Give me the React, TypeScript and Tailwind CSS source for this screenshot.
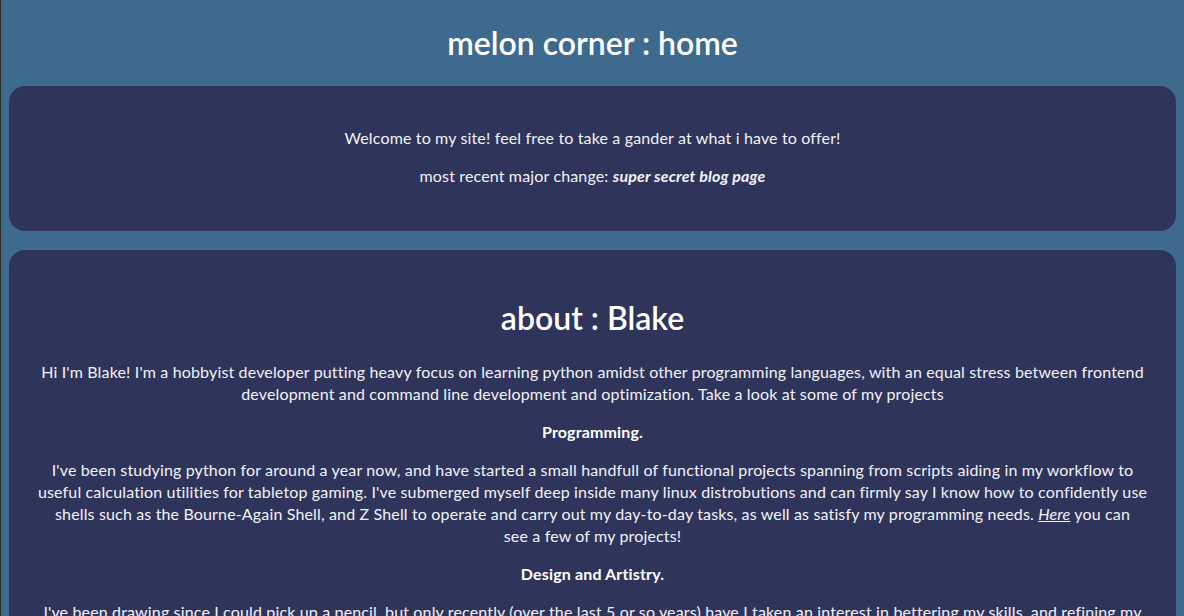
export default function App() {
  return (
    <div className="flow-root min-h-screen border-l border-[#2b2b2b] bg-[#3e6a8e] px-2 pb-5 text-[#f2f2f7] font-['Lato','Noto_Sans',sans-serif] text-base leading-[22px] tracking-[0.15px]">
      <h1 className="my-[21px] text-center text-[32px] leading-[44px] font-semibold tracking-normal text-white">
        melon corner : home
      </h1>

      <section className="rounded-2xl bg-[#2e345a] px-[25px] pt-[25px] pb-[28px] text-center">
        <p className="my-4">Welcome to my site! feel free to take a gander at what i have to offer!</p>
        <p className="my-4">
          most recent major change: <b className="italic font-bold">super secret blog page</b>
        </p>
      </section>

      <section className="mt-[19px] rounded-2xl bg-[#2e345a] px-[25px] pt-[25px] pb-[25px] text-center">
        <h2 className="my-[21px] text-[32px] leading-[44px] font-semibold tracking-normal text-white">about : Blake</h2>
        <p className="my-4">
          Hi I'm Blake! I'm a hobbyist developer putting heavy focus on learning python amidst other programming
          languages, with an equal stress between frontend development and command line development and
          optimization. Take a look at some of my projects
        </p>
        <p className="my-4 font-bold text-white">Programming.</p>
        <p className="my-4">
          I've been studying python for around a year now, and have started a small handfull of functional projects
          spanning from scripts aiding in my workflow to useful calculation utilities for tabletop gaming. I've
          submerged myself deep inside many linux distrobutions and can firmly say I know how to confidently use
          shells such as the Bourne-Again Shell, and Z Shell to operate and carry out my day-to-day tasks, as well as
          satisfy my programming needs. <a href="#" className="italic underline">Here</a> you can{" "}
          <span className="whitespace-nowrap">see a few</span> of my projects!
        </p>
        <p className="my-4 font-bold text-white">Design and Artistry.</p>
        <p className="my-4">
          I've been drawing since I could pick up a pencil, but only recently (over the last 5 or so years) have I
          taken an interest in bettering my skills, and refining my style through practice and study of the artists
          I admire most.
        </p>
      </section>
    </div>
  );
}
